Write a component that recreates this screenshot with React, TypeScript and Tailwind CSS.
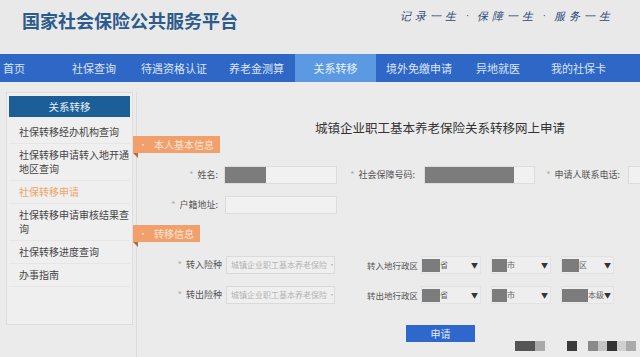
import type { ReactNode } from 'react'

const font = { fontFamily: '"Noto Sans CJK SC", "Noto Sans", sans-serif' }

const navItems = [
  { label: '首页', w: 'w-[60px]', pl: 'pl-[3px]' },
  { label: '社保查询', w: 'w-[70px]', pl: 'pl-[12px]' },
  { label: '待遇资格认证', w: 'w-[88px]', pl: 'pl-[11px]' },
  { label: '养老金测算', w: 'w-[77px]', pl: 'pl-[11px]' },
  { label: '关系转移', w: 'w-[81px]', pl: 'justify-center', active: true },
  { label: '境外免缴申请', w: 'w-[90px]', pl: 'pl-[10px]' },
  { label: '异地就医', w: 'w-[74px]', pl: 'pl-[10px]' },
  { label: '我的社保卡', w: 'w-[100px]', pl: 'pl-[11px]' },
]

const sideItems = [
  { text: '社保转移经办机构查询' },
  { text: '社保转移申请转入地开通地区查询' },
  { text: '社保转移申请', active: true },
  { text: '社保转移申请审核结果查询' },
  { text: '社保转移进度查询' },
  { text: '办事指南' },
]

function Tag({ children }: { children: ReactNode }) {
  return (
    <div className="relative -ml-[4px] flex">
      <div className="flex h-[17px] items-center gap-[7px] whitespace-nowrap bg-[#f1a06c] pl-[6px] pr-[6px] text-[10px] text-[#fde6d6]">
        <span className="text-[8px]">•</span>
        {children}
      </div>
      <div className="absolute left-0 top-[17px] h-0 w-0 border-l-[5px] border-t-[5px] border-l-transparent border-t-[#b9683a]" />
    </div>
  )
}

function Label({ w, children, star = true }: { w: string; children: ReactNode; star?: boolean }) {
  return (
    <div className={`${w} shrink-0 whitespace-nowrap text-right text-[9px] text-[#555]`}>
      {star && <span className="mr-[4px] text-[#aaa]">*</span>}
      {children}
    </div>
  )
}

function Input({ w, gray }: { w: string; gray?: string }) {
  return (
    <div className={`${w} flex h-[18px] shrink-0 border border-[#dcdcdc] bg-[#f1f1f1]`}>
      {gray && <div className={`${gray} h-full bg-[#7c7c7c]`} />}
    </div>
  )
}

function RegionSelect({ w, gray, unit }: { w: string; gray: string; unit: string }) {
  return (
    <div className={`${w} flex h-[18px] shrink-0 items-center whitespace-nowrap border border-[#e2e2e2] bg-[#eeeeee] pr-[2px]`}>
      <div className={`${gray} h-[13px] bg-[#7c7c7c]`} />
      <span className="text-[8px] text-[#666]">{unit}</span>
      <span className="ml-auto text-[7px] text-[#333]">▼</span>
    </div>
  )
}

function InsSelect() {
  return (
    <div className="flex h-[18px] w-[109px] shrink-0 items-center overflow-hidden whitespace-nowrap border border-[#dadada] bg-[#efefef] pl-[4px] text-[8px] text-[#b3b3b3]">
      城镇企业职工基本养老保险
      <span className="ml-[1px]">·</span>
    </div>
  )
}

function RegionRow({ ins, area, last, lastGray }: { ins: string; area: string; last: string; lastGray: string }) {
  return (
    <div className="flex items-center">
      <Label w="w-[85px]">{ins}</Label>
      <div className="w-[4px] shrink-0" />
      <InsSelect />
      <div className="w-[32px] shrink-0" />
      <div className="w-[54px] shrink-0 whitespace-nowrap text-[8.5px] text-[#555]">{area}</div>
      <RegionSelect w="w-[60px]" gray="w-[18px]" unit="省" />
      <div className="w-[10px] shrink-0" />
      <RegionSelect w="w-[60px]" gray="w-[15px]" unit="市" />
      <div className="w-[10px] shrink-0" />
      <RegionSelect w="w-[53px]" gray={lastGray} unit={last} />
    </div>
  )
}

export default function App() {
  return (
    <div className="relative h-[357px] w-[640px] overflow-hidden bg-[#ebebeb]" style={font}>
      {/* Header */}
      <div className="flex h-[54px] items-start justify-between bg-[#e9e9e9]">
        <div className="pl-[22px] pt-[7px] text-[18px] font-bold text-[#2c5b8c]">国家社会保险公共服务平台</div>
        <div className="whitespace-nowrap pr-[26px] pt-[9px] font-serif text-[11px] italic tracking-[4px] text-[#2a4678]">
          记录一生 · 保障一生 · 服务一生
        </div>
      </div>

      {/* Nav */}
      <div className="flex h-[28px] bg-[#2f67c6]">
        {navItems.map((item) => (
          <div
            key={item.label}
            className={`${item.w} ${item.pl} flex h-full shrink-0 items-center whitespace-nowrap text-[11px] ${
              item.active ? 'bg-[#5b9ae3] text-[#e9f1fb]' : 'text-[#dbe5f6]'
            }`}
          >
            {item.label}
          </div>
        ))}
      </div>

      {/* Body */}
      <div className="flex pt-[10px]">
        {/* Sidebar */}
        <div className="ml-[6px] h-[233px] w-[127px] shrink-0 border border-[#dedede] bg-[#efefef] pl-[2px] pr-[2px] pt-[3px]">
          <div className="flex h-[21px] items-center justify-center bg-[#1c5e97] text-[10.5px] text-[#e6eef6]">关系转移</div>
          <div className="pt-[4px]">
            {sideItems.map((s) => (
              <div
                key={s.text}
                className={`border-b border-[#e6e6e6] py-[4px] pl-[10px] text-[10px] leading-[14px] ${
                  s.active ? 'text-[#f0a468]' : 'text-[#454545]'
                }`}
              >
                {s.text}
              </div>
            ))}
          </div>
        </div>

        {/* Main */}
        <div className="ml-[3px] min-h-[270px] flex-1 border-l border-[#dcdcdc]">
          <div className="whitespace-nowrap pl-[178px] pt-[27px] text-[12.5px] leading-[18px] text-[#333]">
            城镇企业职工基本养老保险关系转移网上申请
          </div>

          <div className="mt-[-1px]">
            <Tag>本人基本信息</Tag>
          </div>

          <div className="mt-[13px] flex items-center">
            <Label w="w-[81px]">姓名:</Label>
            <div className="w-[6px] shrink-0" />
            <Input w="w-[113px]" gray="w-[41px]" />
            <Label w="w-[78px]">社会保障号码:</Label>
            <div className="w-[9px] shrink-0" />
            <Input w="w-[111px]" gray="w-[89px]" />
            <Label w="w-[85px]">申请人联系电话:</Label>
            <div className="w-[8px] shrink-0" />
            <Input w="w-[60px]" />
          </div>

          <div className="mt-[12px] flex items-center">
            <Label w="w-[81px]">户籍地址:</Label>
            <div className="w-[7px] shrink-0" />
            <Input w="w-[112px]" />
          </div>

          <div className="mt-[11px]">
            <Tag>转移信息</Tag>
          </div>

          <div className="mt-[14px]">
            <RegionRow ins="转入险种" area="转入地行政区" last="区" lastGray="w-[17px]" />
          </div>
          <div className="mt-[12px]">
            <RegionRow ins="转出险种" area="转出地行政区" last="本级" lastGray="w-[32px]" />
          </div>

          <div className="mt-[21px] pl-[269px]">
            <div className="flex h-[17px] w-[69px] items-center justify-center bg-[#2f68cd] text-[10px] text-[#e2ebfa]">申请</div>
          </div>
        </div>
      </div>

      {/* watermark blocks */}
      <div className="absolute left-[515px] top-[341px] flex h-[10px] items-stretch">
        <div className="w-[20px] bg-[#555]" />
        <div className="w-[10px] bg-[#aaa]" />
        <div className="w-[22px]" />
        <div className="w-[10px] bg-[#3c3c3c]" />
        <div className="w-[11px]" />
        <div className="w-[10px] bg-[#8a8a8a]" />
        <div className="w-[9px] bg-[#c4c4c4]" />
        <div className="w-[10px] bg-[#333]" />
        <div className="w-[9px] bg-[#d0d0d0]" />
        <div className="w-[10px] bg-[#aaa]" />
      </div>
    </div>
  )
}
